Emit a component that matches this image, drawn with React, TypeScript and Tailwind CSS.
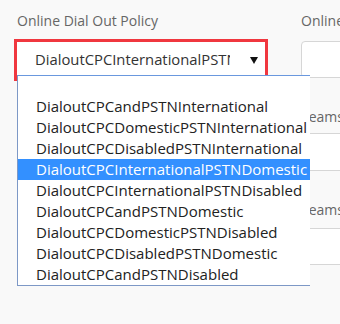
const options = [
    "DialoutCPCandPSTNInternational",
    "DialoutCPCDomesticPSTNInternational",
    "DialoutCPCDisabledPSTNInternational",
    "DialoutCPCInternationalPSTNDomestic",
    "DialoutCPCInternationalPSTNDisabled",
    "DialoutCPCandPSTNDomestic",
    "DialoutCPCDomesticPSTNDisabled",
    "DialoutCPCDisabledPSTNDomestic",
    "DialoutCPCandPSTNDisabled",
];

const selected = "DialoutCPCInternationalPSTNDomestic";

const App = () => {
    return (
        <div className="relative w-[340px] h-[324px] overflow-hidden bg-[#f9f9f9] font-['Open_Sans',sans-serif]">
            <div className="flex gap-[34px] pl-[17px] pt-[11px]">
                {/* left column */}
                <div className="w-[250px] shrink-0">
                    <div className="h-[20px] leading-[20px] text-[14px] text-[#666]">Online Dial Out Policy</div>
                    <div className="mt-[10px] h-[37px] bg-white flex items-center pl-[18px] pr-[9px]">
                        <span className="w-[195px] overflow-hidden whitespace-nowrap text-[14.8px] text-[#333]">
                            {selected}
                        </span>
                        <svg width="8" height="7" viewBox="0 0 8 7" className="ml-[20px] mt-[1px]">
                            <polygon points="0,0 8,0 4,7" fill="#111" />
                        </svg>
                    </div>
                </div>

                {/* right column */}
                <div className="w-[220px] shrink-0">
                    <div className="h-[20px] leading-[20px] text-[14px] text-[#666] whitespace-nowrap">Online Voice Routing Policy</div>
                    <div className="mt-[10px] h-[37px] bg-white border border-[#d6d6d6] rounded-[4px]" />
                    <div className="mt-[29px] h-[20px] leading-[20px] text-[14px] text-[#666] whitespace-nowrap">Teams Call Park Policy</div>
                    <div className="mt-[6px] h-[38px] bg-white border border-[#d6d6d6] rounded-[4px]" />
                    <div className="mt-[29px] h-[20px] leading-[20px] text-[14px] text-[#666] whitespace-nowrap">Teams Calling Policy</div>
                    <div className="mt-[8px] h-[37px] bg-white border border-[#d6d6d6] rounded-[4px]" />
                </div>
            </div>

            {/* red highlight annotation */}
            <div className="absolute left-[14px] top-[39px] w-[254px] h-[42px] border-[3px] border-[#f0373f]" />

            {/* open dropdown list */}
            <div className="absolute left-[17px] top-[75px] w-[293px] bg-white border-l border-b border-t border-[#7d98c6] border-t-[#6a98de]">
                <div className="h-[20px]" />
                {options.map((opt) => (
                    <div
                        key={opt}
                        className={
                            opt === selected
                                ? "h-[21px] leading-[21px] pl-[18px] text-[15px] whitespace-nowrap bg-[#3390ff] text-white"
                                : "h-[21px] leading-[21px] pl-[18px] text-[15px] whitespace-nowrap text-[#222]"
                        }
                    >
                        {opt}
                    </div>
                ))}
            </div>
        </div>
    );
};

export default App;
